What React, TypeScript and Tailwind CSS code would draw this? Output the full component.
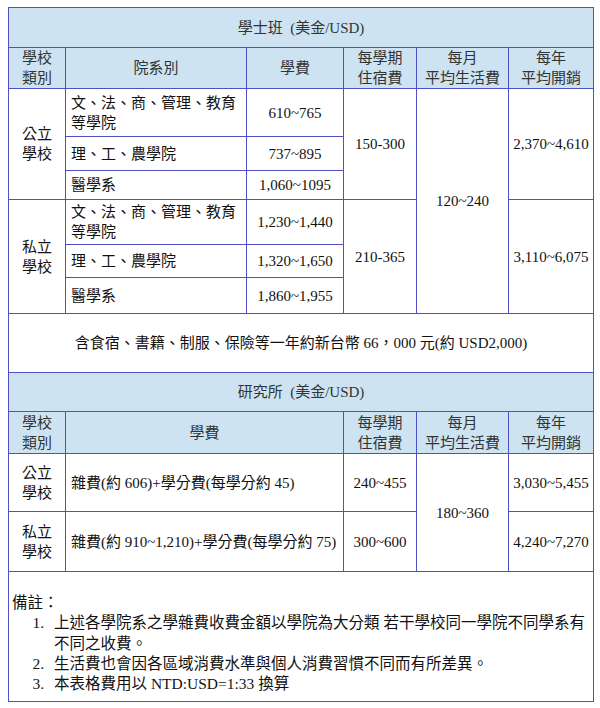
import React from 'react'

const cell = "border border-[#5050c6] align-middle"
const head = "border border-[#5050c6] bg-[#cde3f1] text-[#333] text-center align-middle"

interface Row {
  dept: React.ReactNode
  fee: string
  h: string
}

const pubRows: Row[] = [
  { dept: <>文、法、商、管理、教育<br />等學院</>, fee: '610~765', h: 'h-[48px]' },
  { dept: '理、工、農學院', fee: '737~895', h: 'h-[34px]' },
  { dept: '醫學系', fee: '1,060~1095', h: 'h-[29px]' },
]

const privRows: Row[] = [
  { dept: <>文、法、商、管理、教育<br />等學院</>, fee: '1,230~1,440', h: 'h-[45px]' },
  { dept: '理、工、農學院', fee: '1,320~1,650', h: 'h-[33px]' },
  { dept: '醫學系', fee: '1,860~1,955', h: 'h-[36px]' },
]

export default function App() {
  return (
    <div className="bg-white pl-[8px] pt-[7px] pb-[7px] font-['Liberation_Serif','Noto_Sans_CJK_TC',serif] text-[15px] leading-[20px] text-[#111]">
      <table className="w-[585px] table-fixed border-collapse">
        <colgroup>
          <col className="w-[57px]" />
          <col className="w-[181px]" />
          <col className="w-[97px]" />
          <col className="w-[73px]" />
          <col className="w-[92px]" />
          <col className="w-[85px]" />
        </colgroup>
        <tbody>
          <tr className="h-[40px]">
            <td colSpan={6} className={head}>學士班&nbsp; (美金/USD)</td>
          </tr>
          <tr className="h-[41px]">
            <td className={head}>學校<br />類別</td>
            <td className={head}>院系別</td>
            <td className={head}>學費</td>
            <td className={head}>每學期<br />住宿費</td>
            <td className={head}>每月<br />平均生活費</td>
            <td className={head}>每年<br />平均開銷</td>
          </tr>
          {pubRows.map((r, i) => (
            <tr key={'p' + i} className={r.h}>
              {i === 0 && <td rowSpan={3} className={cell + " text-center"}>公立<br />學校</td>}
              <td className={cell + " pl-[5px]"}>{r.dept}</td>
              <td className={cell + " text-center"}>{r.fee}</td>
              {i === 0 && <td rowSpan={3} className={cell + " text-center"}>150-300</td>}
              {i === 0 && <td rowSpan={6} className={cell + " text-center"}>120~240</td>}
              {i === 0 && <td rowSpan={3} className={cell + " text-center"}>2,370~4,610</td>}
            </tr>
          ))}
          {privRows.map((r, i) => (
            <tr key={'v' + i} className={r.h}>
              {i === 0 && <td rowSpan={3} className={cell + " text-center"}>私立<br />學校</td>}
              <td className={cell + " pl-[5px]"}>{r.dept}</td>
              <td className={cell + " text-center"}>{r.fee}</td>
              {i === 0 && <td rowSpan={3} className={cell + " text-center"}>210-365</td>}
              {i === 0 && <td rowSpan={3} className={cell + " text-center"}>3,110~6,075</td>}
            </tr>
          ))}
          <tr className="h-[59px]">
            <td colSpan={6} className={cell + " text-center"}>
              含食宿、書籍、制服、保險等一年約新台幣 66，000 元(約 USD2,000)
            </td>
          </tr>
          <tr className="h-[39px]">
            <td colSpan={6} className={head}>研究所&nbsp; (美金/USD)</td>
          </tr>
          <tr className="h-[42px]">
            <td className={head}>學校<br />類別</td>
            <td colSpan={2} className={head}>學費</td>
            <td className={head}>每學期<br />住宿費</td>
            <td className={head}>每月<br />平均生活費</td>
            <td className={head}>每年<br />平均開銷</td>
          </tr>
          <tr className="h-[58px]">
            <td className={cell + " text-center"}>公立<br />學校</td>
            <td colSpan={2} className={cell + " pl-[5px]"}>雜費(約 606)+學分費(每學分約 45)</td>
            <td className={cell + " text-center"}>240~455</td>
            <td rowSpan={2} className={cell + " text-center"}>180~360</td>
            <td className={cell + " text-center"}>3,030~5,455</td>
          </tr>
          <tr className="h-[60px]">
            <td className={cell + " text-center"}>私立<br />學校</td>
            <td colSpan={2} className={cell + " pl-[5px] whitespace-nowrap"}>雜費(約 910~1,210)+學分費(每學分約 75)</td>
            <td className={cell + " text-center"}>300~600</td>
            <td className={cell + " text-center"}>4,240~7,270</td>
          </tr>
          <tr className="h-[130px]">
            <td colSpan={6} className="border border-[#5050c6] align-top pl-[3px] pt-[21px] pb-[4px] text-[15.5px] leading-[20.25px]">
              <div>備註：</div>
              <div className="flex">
                <span className="w-[42px] shrink-0 pr-[10px] text-right">1.</span>
                <span>上述各學院系之學雜費收費金額以學院為大分類 若干學校同一學院不同學系有<br />不同之收費。</span>
              </div>
              <div className="flex">
                <span className="w-[42px] shrink-0 pr-[10px] text-right">2.</span>
                <span>生活費也會因各區域消費水準與個人消費習慣不同而有所差異。</span>
              </div>
              <div className="flex">
                <span className="w-[42px] shrink-0 pr-[10px] text-right">3.</span>
                <span>本表格費用以 NTD:USD=1:33 換算</span>
              </div>
            </td>
          </tr>
        </tbody>
      </table>
    </div>
  )
}
